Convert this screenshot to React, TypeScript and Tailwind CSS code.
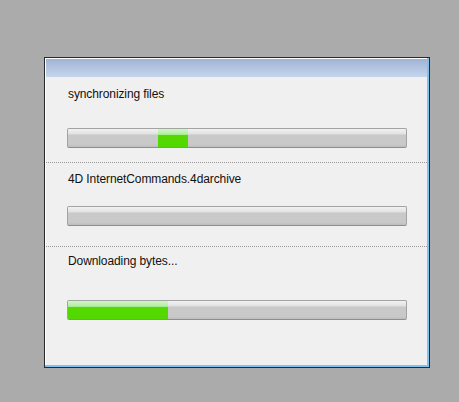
function Bar({ from, width }: { from: number; width: number }) {
  return (
    <div className="relative h-5 w-[340px] rounded-[2px] border border-[#a3a3a3] border-b-[#8e8e8e] bg-[linear-gradient(to_bottom,#f2f2f2_0%,#e3e3e3_25%,#c9c9c9_35%,#c9c9c9_85%,#bdbdbd_100%)] overflow-hidden">
      {width > 0 && (
        <div
          className="absolute top-0 bottom-0 bg-[linear-gradient(to_bottom,#d0f7c4_0%,#b0eea0_30%,#55d900_36%,#52d800_100%)]"
          style={{ left: from, width }}
        />
      )}
    </div>
  );
}

function Section({
  label,
  from,
  width,
  textTop,
  gap,
  after,
  last,
}: {
  label: string;
  from: number;
  width: number;
  textTop: number;
  gap: number;
  after: number;
  last?: boolean;
}) {
  return (
    <div
      className={
        last
          ? "flex flex-col px-[21px]"
          : "flex flex-col px-[21px] border-b border-dotted border-[#9a9a9a]"
      }
      style={{ paddingTop: textTop, paddingBottom: after }}
    >
      <div className="ml-px text-[12px] leading-[14px] tracking-[-0.1px] text-[#111]">{label}</div>
      <div style={{ marginTop: gap }}>
        <Bar from={from} width={width} />
      </div>
    </div>
  );
}

export default function App() {
  return (
    <div
      className="w-[459px] h-[402px] bg-[#ababab] pt-[57px] pl-[44px]"
      style={{ fontFamily: "'Liberation Sans', Arial, sans-serif" }}
    >
      <div className="w-[386px] h-[311px] border border-[#2a2a2a] bg-[#7fc1ef] flex flex-col">
        <div className="flex-1 flex flex-col border-l border-t border-white mr-[2px] mb-[2px] bg-[#f0f0f0]">
          <div className="h-[18px] bg-[linear-gradient(to_bottom,#a1b4d5,#c5d5ee)]" />
          <div className="flex flex-col">
            <Section label="synchronizing files" from={90} width={30} textTop={10} gap={27} after={14} />
            <Section label="4D InternetCommands.4darchive" from={0} width={0} textTop={9} gap={20} after={20} />
            <Section label="Downloading bytes..." from={0} width={100} textTop={7} gap={32} after={0} last />
          </div>
        </div>
      </div>
    </div>
  );
}
